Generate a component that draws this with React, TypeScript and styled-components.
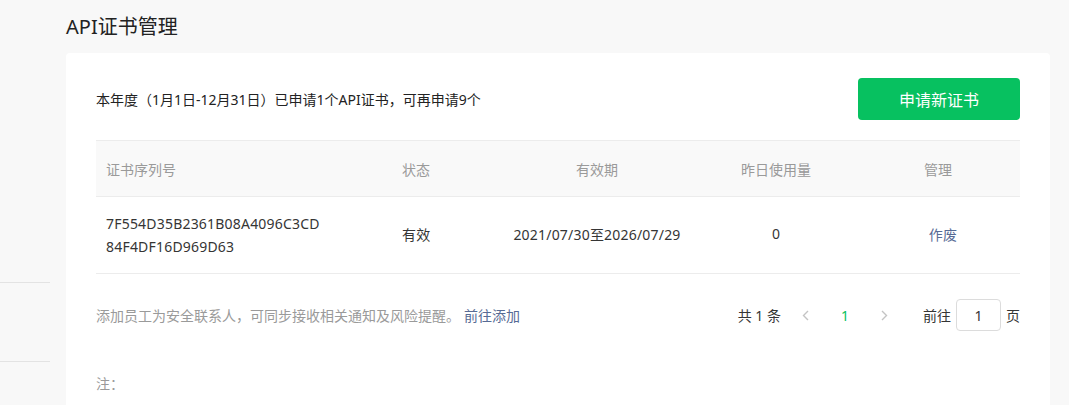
import React from "react";
import styled, { createGlobalStyle } from "styled-components";

const GlobalStyle = createGlobalStyle`
  html, body {
    margin: 0;
    padding: 0;
    background: #f8f8f8;
  }
  body {
    font-family: "Noto Sans", "Noto Sans CJK SC", sans-serif;
    color: #353535;
    font-size: 14px;
  }
  * {
    box-sizing: border-box;
  }
`;

interface Cert {
  serial: string;
  status: string;
  from: string;
  to: string;
  usage: number;
}

const certs: Cert[] = [
  {
    serial: "7F554D35B2361B08A4096C3CD84F4DF16D969D63",
    status: "有效",
    from: "2021/07/30",
    to: "2026/07/29",
    usage: 0,
  },
];

const COLS = "296px 112px 186px 172px 158px";

const ChevronLeft = () => (
  <svg width="7" height="11" viewBox="0 0 7 11">
    <path d="M6 1 L1.5 5.5 L6 10" fill="none" stroke="#c4c4c4" strokeWidth="1.4" />
  </svg>
);

const ChevronRight = () => (
  <svg width="7" height="11" viewBox="0 0 7 11">
    <path d="M1 1 L5.5 5.5 L1 10" fill="none" stroke="#c4c4c4" strokeWidth="1.4" />
  </svg>
);

export default function App() {
  return (
    <>
      <GlobalStyle />
      <Layout>
        <Sidebar>
          <NavItem />
          <NavItem />
        </Sidebar>

        <Main>
          <PageTitle>API证书管理</PageTitle>

          <Card>
            <Toolbar>
              <Quota>本年度（1月1日-12月31日）已申请1个API证书，可再申请9个</Quota>
              <PrimaryButton>申请新证书</PrimaryButton>
            </Toolbar>

            <Table>
              <HeadRow>
                <Cell>证书序列号</Cell>
                <Cell>状态</Cell>
                <Cell $center>有效期</Cell>
                <Cell $center>昨日使用量</Cell>
                <Cell $center $shift={-3}>管理</Cell>
              </HeadRow>
              {certs.map((c) => (
                <BodyRow key={c.serial}>
                  <Cell>
                    <Serial>
                      {c.serial.slice(0, 25)}
                      <br />
                      {c.serial.slice(25)}
                    </Serial>
                  </Cell>
                  <Cell>{c.status}</Cell>
                  <Cell $center $nowrap>
                    {c.from}至{c.to}
                  </Cell>
                  <Cell $center>{c.usage}</Cell>
                  <Cell $center>
                    <Link>作废</Link>
                  </Cell>
                </BodyRow>
              ))}
            </Table>

            <Footer>
              <Hint>
                添加员工为安全联系人，可同步接收相关通知及风险提醒。
                <Link>前往添加</Link>
              </Hint>

              <Pager>
                <Total>共 1 条</Total>
                <PageArrow>
                  <ChevronLeft />
                </PageArrow>
                <PageNum>1</PageNum>
                <PageArrow>
                  <ChevronRight />
                </PageArrow>
                <Jump>
                  前往
                  <PageInput defaultValue="1" />
                  页
                </Jump>
              </Pager>
            </Footer>

            <Note>注：</Note>
          </Card>
        </Main>
      </Layout>
    </>
  );
}

const Layout = styled.div`
  display: flex;
  gap: 16px;
  min-height: 405px;
`;

const Sidebar = styled.nav`
  width: 50px;
  flex-shrink: 0;
  padding-top: 204px;
`;

const NavItem = styled.div`
  height: 79px;
  border-bottom: 1px solid #e3e3e3;
`;

const Main = styled.main`
  flex: 1;
  padding: 12px 19px 0 0;
`;

const PageTitle = styled.h1`
  margin: 0 0 11px;
  font-size: 20px;
  font-weight: 400;
  line-height: 30px;
  color: #222;
`;

const Card = styled.section`
  background: #ffffff;
  border-radius: 4px;
  padding: 25px 30px 30px;
  min-height: 400px;
`;

const Toolbar = styled.div`
  display: flex;
  align-items: center;
  justify-content: space-between;
  margin-bottom: 20px;
`;

const Quota = styled.p`
  margin: 0;
  font-size: 14px;
  color: #222;
`;

const PrimaryButton = styled.button`
  width: 162px;
  height: 42px;
  border: none;
  border-radius: 4px;
  background: #07c160;
  color: #ffffff;
  font-family: inherit;
  font-size: 16px;
  cursor: pointer;
`;

const Table = styled.div`
  border-top: 1px solid #ececec;
`;

const Row = styled.div`
  display: grid;
  grid-template-columns: ${COLS};
  align-items: center;
  border-bottom: 1px solid #ececec;
`;

const HeadRow = styled(Row)`
  height: 56px;
  background: #f9f9f9;
  color: #9a9a9a;
`;

const BodyRow = styled(Row)`
  height: 77px;
  padding-bottom: 3px;
  color: #353535;
  letter-spacing: 0.2px;
`;

const Cell = styled.div<{ $center?: boolean; $shift?: number; $nowrap?: boolean }>`
  padding: 0 10px;
  text-align: ${(p) => (p.$center ? "center" : "left")};
  ${(p) => (p.$nowrap ? "white-space: nowrap; padding: 0;" : "")}
  ${(p) => (p.$shift ? `transform: translateX(${p.$shift}px);` : "")}
`;

const Serial = styled.span`
  display: block;
  line-height: 23px;
  transform: translateY(1px);
`;

const Link = styled.a`
  color: #576b95;
  cursor: pointer;
  margin-left: 4px;
`;

const Footer = styled.div`
  display: flex;
  align-items: center;
  justify-content: space-between;
  margin-top: 25px;
`;

const Hint = styled.p`
  margin: 0;
  color: #9a9a9a;
`;

const Pager = styled.div`
  display: flex;
  align-items: center;
  color: #353535;
`;

const Total = styled.span`
  margin-right: 21px;
`;

const PageArrow = styled.span`
  display: inline-flex;
  width: 7px;
  justify-content: center;
`;

const PageNum = styled.span`
  color: #07c160;
  width: 72px;
  text-align: center;
`;

const Jump = styled.span`
  display: inline-flex;
  align-items: center;
  gap: 5px;
  margin-left: 35px;
`;

const PageInput = styled.input`
  width: 45px;
  height: 32px;
  border: 1px solid #dcdcdc;
  border-radius: 4px;
  text-align: center;
  font-family: inherit;
  font-size: 14px;
  color: #353535;
  outline: none;
`;

const Note = styled.p`
  margin: 42px 0 0;
  color: #9a9a9a;
`;
